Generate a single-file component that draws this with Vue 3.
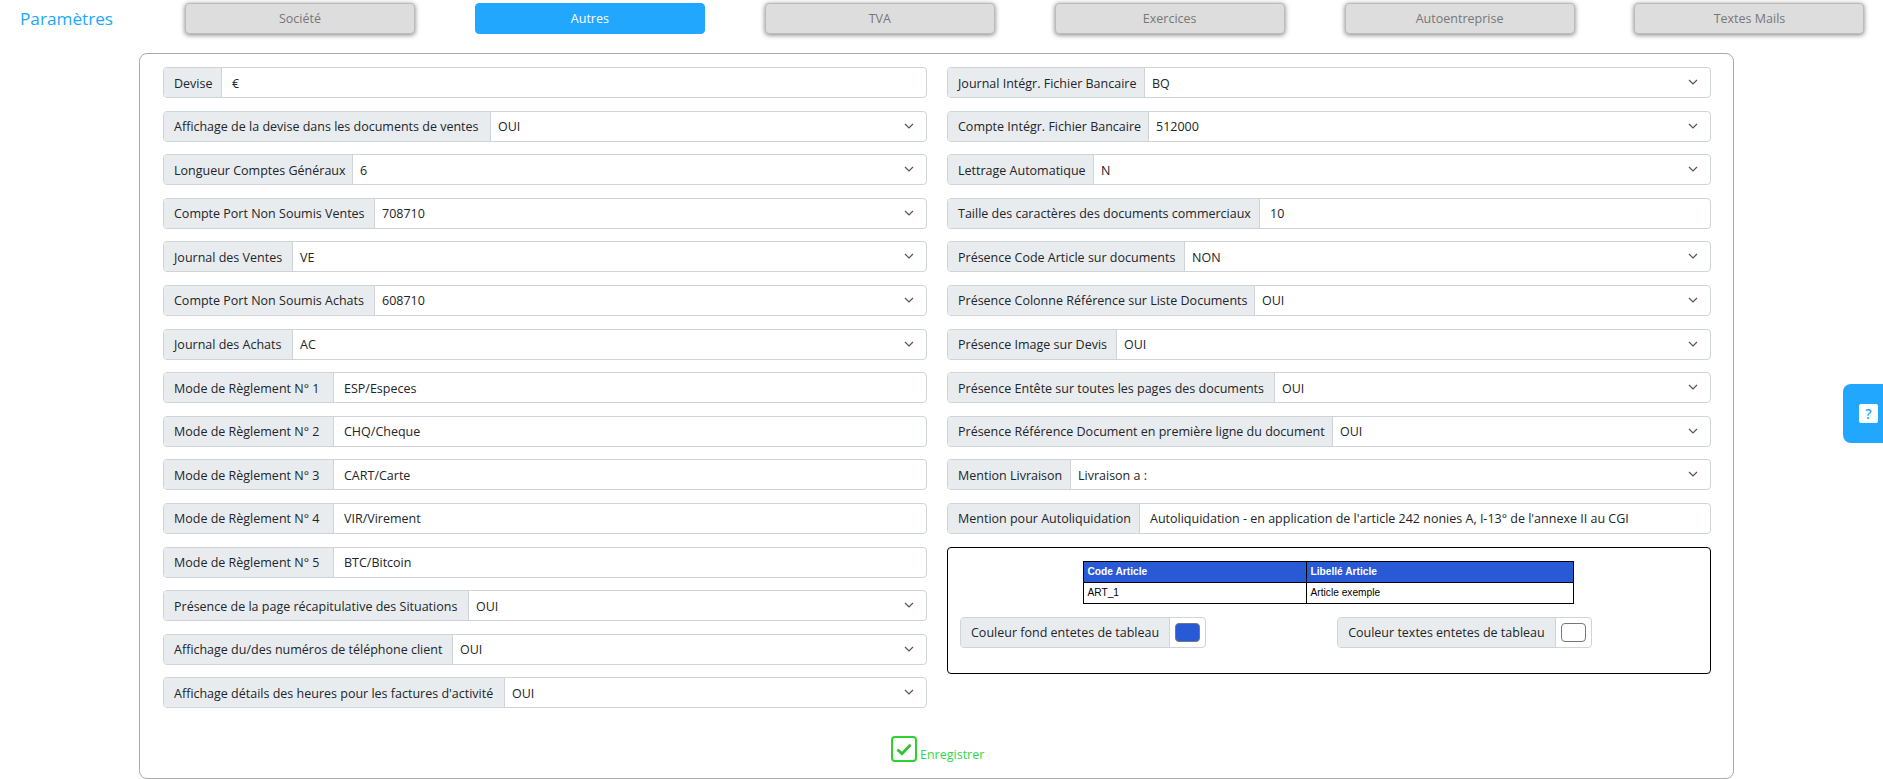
<template>
  <div class="page">
    <header class="top">
      <h1 class="title">Paramètres</h1>
      <nav class="tabs">
        <button v-for="t in tabs" :key="t" class="tab" :class="{ active: t === 'Autres' }">{{ t }}</button>
      </nav>
    </header>

    <form class="panel" @submit.prevent>
      <div class="cols">
        <div class="col">
          <div v-for="r in leftRows" :key="r.label" class="group">
            <span class="label" :style="{ width: r.w + 'px' }">{{ r.label }}</span>
            <span class="field" :class="{ select: r.select }">
              {{ r.value }}
              <svg v-if="r.select" class="chevron" width="10" height="6" viewBox="0 0 10 6"><path d="M1 1 L5 5 L9 1" fill="none" stroke="#555" stroke-width="1.2" /></svg>
            </span>
          </div>
        </div>
        <div class="col">
          <div v-for="r in rightRows" :key="r.label" class="group">
            <span class="label" :style="{ width: r.w + 'px' }">{{ r.label }}</span>
            <span class="field" :class="{ select: r.select }">
              {{ r.value }}
              <svg v-if="r.select" class="chevron" width="10" height="6" viewBox="0 0 10 6"><path d="M1 1 L5 5 L9 1" fill="none" stroke="#555" stroke-width="1.2" /></svg>
            </span>
          </div>
          <div class="preview">
            <table class="sample">
              <thead>
                <tr><th class="c1">Code Article</th><th>Libellé Article</th></tr>
              </thead>
              <tbody>
                <tr><td>ART_1</td><td>Article exemple</td></tr>
              </tbody>
            </table>
            <div class="colors">
              <div class="group color-group">
                <span class="label">Couleur fond entetes de tableau</span>
                <span class="swatch-wrap"><span class="swatch blue"></span></span>
              </div>
              <div class="group color-group">
                <span class="label">Couleur textes entetes de tableau</span>
                <span class="swatch-wrap"><span class="swatch white"></span></span>
              </div>
            </div>
          </div>
        </div>
      </div>
      <div class="save">
        <span class="check">
          <svg width="16" height="13" viewBox="0 0 16 13"><path d="M1.5 6.5 L6 10.8 L14.5 1.8" fill="none" stroke="#35c235" stroke-width="2.8" /></svg>
        </span>
        <span class="save-text">Enregistrer</span>
      </div>
    </form>

    <div class="help"><span class="help-box">?</span></div>
  </div>
</template>

<script setup>
const tabs = ['Société', 'Autres', 'TVA', 'Exercices', 'Autoentreprise', 'Textes Mails']

const leftRows = [
  { label: 'Devise', value: '€', w: 58 },
  { label: 'Affichage de la devise dans les documents de ventes', value: 'OUI', select: true, w: 327 },
  { label: 'Longueur Comptes Généraux', value: '6', select: true, w: 189 },
  { label: 'Compte Port Non Soumis Ventes', value: '708710', select: true, w: 211 },
  { label: 'Journal des Ventes', value: 'VE', select: true, w: 129 },
  { label: 'Compte Port Non Soumis Achats', value: '608710', select: true, w: 211 },
  { label: 'Journal des Achats', value: 'AC', select: true, w: 129 },
  { label: 'Mode de Règlement N° 1', value: 'ESP/Especes', w: 170 },
  { label: 'Mode de Règlement N° 2', value: 'CHQ/Cheque', w: 170 },
  { label: 'Mode de Règlement N° 3', value: 'CART/Carte', w: 170 },
  { label: 'Mode de Règlement N° 4', value: 'VIR/Virement', w: 170 },
  { label: 'Mode de Règlement N° 5', value: 'BTC/Bitcoin', w: 170 },
  { label: 'Présence de la page récapitulative des Situations', value: 'OUI', select: true, w: 305 },
  { label: 'Affichage du/des numéros de téléphone client', value: 'OUI', select: true, w: 289 },
  { label: "Affichage détails des heures pour les factures d'activité", value: 'OUI', select: true, w: 341 },
]

const rightRows = [
  { label: 'Journal Intégr. Fichier Bancaire', value: 'BQ', select: true, w: 197 },
  { label: 'Compte Intégr. Fichier Bancaire', value: '512000', select: true, w: 201 },
  { label: 'Lettrage Automatique', value: 'N', select: true, w: 146 },
  { label: 'Taille des caractères des documents commerciaux', value: '10', w: 312 },
  { label: 'Présence Code Article sur documents', value: 'NON', select: true, w: 237 },
  { label: 'Présence Colonne Référence sur Liste Documents', value: 'OUI', select: true, w: 307 },
  { label: 'Présence Image sur Devis', value: 'OUI', select: true, w: 169 },
  { label: 'Présence Entête sur toutes les pages des documents', value: 'OUI', select: true, w: 327 },
  { label: 'Présence Référence Document en première ligne du document', value: 'OUI', select: true, w: 385 },
  { label: 'Mention Livraison', value: 'Livraison a :', select: true, w: 123 },
  { label: 'Mention pour Autoliquidation', value: "Autoliquidation - en application de l'article 242 nonies A, I-13° de l'annexe II au CGI", w: 192 },
]
</script>

<style>
html, body { margin: 0; background: #fff; }
</style>

<style scoped>
.page {
  width: 1883px;
  height: 779px;
  overflow: hidden;
  position: relative;
  font-family: "Open Sans", sans-serif;
  font-size: 12.5px;
  color: #212529;
}
.top {
  display: flex;
  align-items: flex-start;
  height: 53px;
  box-sizing: border-box;
  padding: 3px 0 0 20px;
}
.title {
  margin: 0;
  width: 165px;
  font-size: 17.2px;
  font-weight: 400;
  line-height: 31px;
  color: #22a7ff;
}
.tabs { display: flex; gap: 59.9px; }
.tab {
  width: 230px;
  height: 31px;
  padding: 0;
  border: 1px solid #bbb;
  border-radius: 4px;
  background: #ddd;
  color: #777;
  font: inherit;
  box-shadow: 0 1px 5px rgba(0, 0, 0, 0.5);
}
.tab.active {
  background: #22a7ff;
  border-color: #22a7ff;
  color: #fff;
  box-shadow: none;
}
.panel {
  margin-left: 139px;
  width: 1595px;
  height: 726px;
  box-sizing: border-box;
  border: 1px solid #aaa;
  border-radius: 8px;
  padding: 13px 22px 0 23px;
  position: relative;
}
.cols { display: flex; gap: 20px; }
.col { width: 764px; display: flex; flex-direction: column; gap: 12.6px; }
.group {
  display: flex;
  height: 31px;
  box-sizing: border-box;
  border: 1px solid #ced4da;
  border-radius: 4px;
  overflow: hidden;
  background: #fff;
  flex: none;
}
.label {
  display: flex;
  align-items: center;
  flex: none;
  box-sizing: border-box;
  padding: 1px 0 0 10px;
  background: #e9ecef;
  border-right: 1px solid #ced4da;
  white-space: nowrap;
}
.field {
  flex: 1;
  display: flex;
  align-items: center;
  padding: 1px 10px 0;
  position: relative;
}
.field.select { padding-left: 7px; }
.chevron {
  position: absolute;
  right: 12px;
  top: 11px;
}
.preview {
  height: 127px;
  box-sizing: border-box;
  border: 1px solid #000;
  border-radius: 4px;
  padding: 13px 12px 0;
}
.sample {
  width: 491px;
  margin: 0 auto;
  position: relative;
  left: -1px;
  border-collapse: collapse;
  font-family: "Liberation Sans", Arial, sans-serif;
  font-size: 10.2px;
  color: #000;
}
.sample th, .sample td {
  border: 1px solid #000;
  height: 20px;
  padding: 0 4px;
  text-align: left;
}
.sample th { background: #295ad6; color: #fff; }
.c1 { width: 214px; }
.colors { display: flex; margin-top: 13px; }
.color-group { margin-right: 131px; }
.color-group .label { padding: 0 10px; }
.swatch-wrap { display: flex; align-items: center; padding: 0 5px; }
.swatch {
  width: 25px;
  height: 19px;
  box-sizing: border-box;
  border: 1px solid #777;
  border-radius: 4px;
}
.blue { background: #295ad6; }
.white { background: #fff; }
.save {
  position: absolute;
  left: 751px;
  top: 682px;
  display: flex;
  align-items: flex-end;
  gap: 3px;
  color: #32d74b;
}
.save-text { position: relative; top: 1px; }
.check {
  width: 26px;
  height: 26px;
  box-sizing: border-box;
  border: 2px solid #2fd12f;
  border-radius: 4px;
  display: flex;
  align-items: center;
  justify-content: center;
}
.help {
  position: absolute;
  right: 0;
  top: 384px;
  width: 40px;
  height: 59px;
  background: #22a7ff;
  border-radius: 8px 0 0 8px;
  display: flex;
  align-items: center;
  padding-left: 16px;
  box-sizing: border-box;
}
.help-box {
  width: 19px;
  height: 19px;
  background: #fff;
  border-radius: 2px;
  color: #22a7ff;
  font-size: 14px;
  font-weight: 600;
  display: flex;
  align-items: center;
  justify-content: center;
}
</style>
